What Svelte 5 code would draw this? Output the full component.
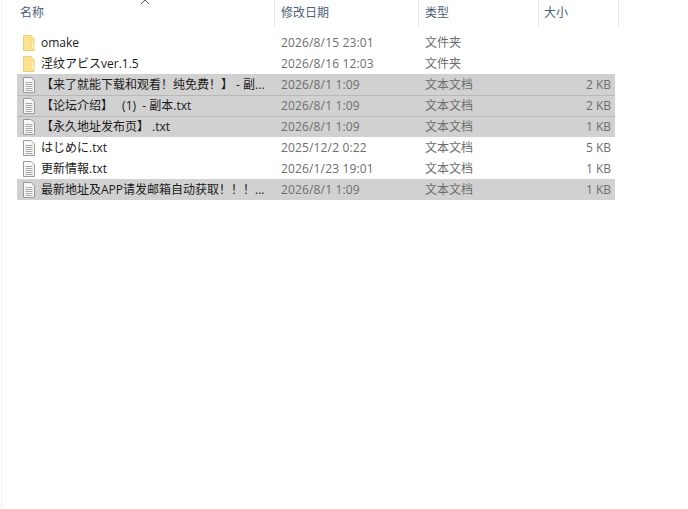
<script>
	const files = [
		{ name: "omake", date: "2026/8/15 23:01", type: "文件夹", size: "", icon: "folder" },
		{ name: "淫纹アビスver.1.5", date: "2026/8/16 12:03", type: "文件夹", size: "", icon: "folder" },
		{ name: "【来了就能下载和观看！纯免费！】 - 副...", date: "2026/8/1 1:09", type: "文本文档", size: "2 KB", icon: "txt", selected: true },
		{ name: "【论坛介绍】\u3000 (1)  - 副本.txt", date: "2026/8/1 1:09", type: "文本文档", size: "2 KB", icon: "txt", selected: true },
		{ name: "【永久地址发布页】 .txt", date: "2026/8/1 1:09", type: "文本文档", size: "1 KB", icon: "txt", selected: true },
		{ name: "はじめに.txt", date: "2025/12/2 0:22", type: "文本文档", size: "5 KB", icon: "txt" },
		{ name: "更新情報.txt", date: "2026/1/23 19:01", type: "文本文档", size: "1 KB", icon: "txt" },
		{ name: "最新地址及APP请发邮箱自动获取！！！...", date: "2026/8/1 1:09", type: "文本文档", size: "1 KB", icon: "txt", selected: true }
	];
</script>

<main>
	<div class="header">
		<div class="col name-col">
			<span>名称</span>
			<svg class="sort" width="10" height="5" viewBox="0 0 10 5"><path d="M1 5 L5 1 L9 5" fill="none" stroke="#555" stroke-width="1" /></svg>
		</div>
		<div class="col date-col">修改日期</div>
		<div class="col type-col">类型</div>
		<div class="col size-col">大小</div>
	</div>

	<div class="list">
		{#each files as file}
			<div class="row" class:selected={file.selected}>
				<div class="name">
					{#if file.icon === "folder"}
						<svg class="icon" width="16" height="18" viewBox="0 0 16 18">
							<path d="M3.5 1.5 H11 V4 H14 V16.5 H3.5 Z" fill="#fde28f" stroke="#f0cf72" />
							<path d="M11.5 1.5 V14 H14" fill="#fff2c4" stroke="#f5dc94" />
						</svg>
					{:else}
						<svg class="icon" width="16" height="18" viewBox="0 0 16 18">
							<path d="M3.5 1.5 H11 L14.5 5 V16.5 H3.5 Z" fill="#f8f8f8" stroke="#9a9a9a" />
							<path d="M5.5 6.5 H12.5 M5.5 8.5 H12.5 M5.5 10.5 H12.5 M5.5 12.5 H12.5 M5.5 14.5 H12.5" stroke="#a8a8a8" />
						</svg>
					{/if}
					<span>{file.name}</span>
				</div>
				<div class="date">{file.date}</div>
				<div class="type">{file.type}</div>
				<div class="size">{file.size}</div>
			</div>
		{/each}
	</div>
</main>

<style>
:global(body) {
	margin: 0;
	background: #fff;
}

main {
	width: 687px;
	height: 509px;
	box-sizing: border-box;
	border-left: 1px solid #f0f0f0;
	margin-left: 1px;
	font-family: "Open Sans", "Noto Sans CJK SC", sans-serif;
	font-size: 12px;
	overflow: hidden;
}

.header {
	display: flex;
	height: 26px;
	margin-left: 16px;
	color: #4c607a;
}

.col {
	box-sizing: border-box;
	padding: 5px 0 0 2px;
	border-right: 1px solid #e5e5e5;
	line-height: 16px;
}

.name-col {
	width: 257px;
	position: relative;
}

.sort {
	position: absolute;
	left: 122px;
	top: -1px;
}

.date-col {
	width: 144px;
	padding-left: 6px;
}

.type-col {
	width: 120px;
	padding-left: 6px;
}

.size-col {
	width: 80px;
	padding-left: 5px;
}

.list {
	margin-top: 6px;
	margin-left: 15px;
	width: 598px;
}

.row {
	display: grid;
	grid-template-columns: 257px 144px 120px 1fr;
	box-sizing: border-box;
	height: 21px;
	padding-top: 1px;
	line-height: 20px;
	align-items: center;
	color: #6d6d6d;
}

.row.selected {
	background: #d1d1d1;
}

.row.selected + .row.selected {
	box-shadow: inset 0 1px 0 #b8b8b8;
}

.name {
	display: flex;
	align-items: center;
	color: #1a1a1a;
	white-space: pre;
	padding-left: 3px;
}

.icon {
	flex: none;
	margin-right: 5px;
	margin-top: -1px;
}

.date {
	padding-left: 7px;
	letter-spacing: 0.15px;
}

.type {
	padding-left: 7px;
}

.size {
	text-align: right;
	padding-right: 4px;
}
</style>
